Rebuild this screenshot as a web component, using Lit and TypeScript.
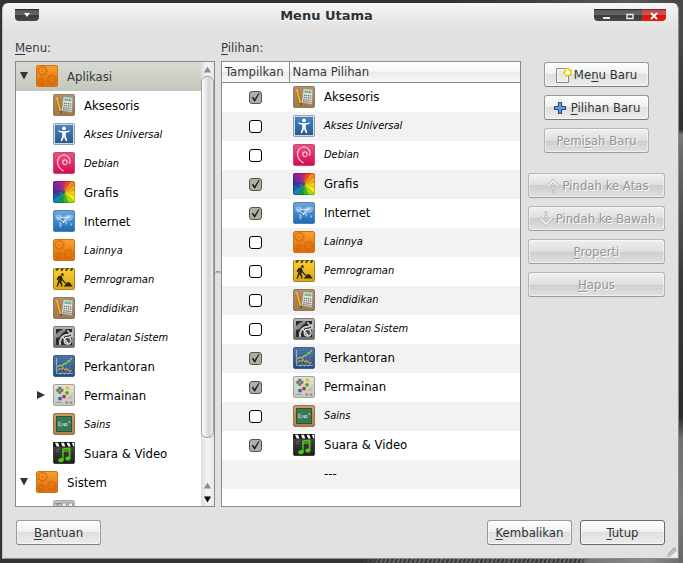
import { LitElement, html, svg, css, nothing, TemplateResult } from "lit";
import { customElement, property } from "lit/decorators.js";
import { classMap } from "lit/directives/class-map.js";

interface Entry {
  name: string;
  icon: string;
  shown: boolean;
  expander?: "open" | "closed";
}

const entries: Entry[] = [
  { name: "Aksesoris", icon: "accessories", shown: true },
  { name: "Akses Universal", icon: "access", shown: false },
  { name: "Debian", icon: "debian", shown: false },
  { name: "Grafis", icon: "graphics", shown: true },
  { name: "Internet", icon: "internet", shown: true },
  { name: "Lainnya", icon: "gears", shown: false },
  { name: "Pemrograman", icon: "development", shown: false },
  { name: "Pendidikan", icon: "accessories", shown: false },
  { name: "Peralatan Sistem", icon: "system", shown: false },
  { name: "Perkantoran", icon: "office", shown: true },
  { name: "Permainan", icon: "games", shown: true, expander: "closed" },
  { name: "Sains", icon: "science", shown: false },
  { name: "Suara & Video", icon: "multimedia", shown: true },
];

const tile = (id: string, top: string, bottom: string, edge: string) => svg`
  <defs><linearGradient id=${id} x1="0" y1="0" x2="0" y2="1">
    <stop offset="0" stop-color=${top}></stop><stop offset="1" stop-color=${bottom}></stop>
  </linearGradient></defs>
  <rect x=".5" y=".5" width="21" height="21" rx="1.5" fill="url(#${id})" stroke=${edge}></rect>`;

const wheel = ["#f08a1c", "#f7a81b", "#fbd20c", "#f4f00a", "#a5dc14", "#3cb42c", "#159a4e", "#0f86b8", "#2353b8", "#4b2f9c", "#6a2a9a", "#8e2796", "#c2247a", "#e8452c"];
const spoke = (i: number) => {
  const a = ((i * 360) / wheel.length - 60) * (Math.PI / 180);
  return [11 + 18 * Math.cos(a), 11 + 18 * Math.sin(a)];
};

const gear = (x: number, y: number, r: number) => svg`
  <circle cx=${x} cy=${y} r=${r} fill="none" stroke="#c85f06" stroke-opacity=".6" stroke-width="1.3"></circle>
  <circle cx=${x} cy=${y} r=${r + 1.2} fill="none" stroke="#c85f06" stroke-opacity=".6" stroke-width="1.3" stroke-dasharray="1.5 1.5"></circle>
  <circle cx=${x} cy=${y} r=${r / 3} fill="#c85f06" fill-opacity=".5"></circle>`;

const art: Record<string, () => TemplateResult> = {
  accessories: () => svg`${tile("wood", "#b59468", "#9a7448", "#8f7a60")}
    <path d="M2 16H21M2 19H21" stroke="#ae8656" stroke-width=".7"></path>
    <path d="M2.2 3.2 4.8 2.2 8.6 16.2 8.4 19 6.2 17Z" fill="#f2b42a" stroke="#8e5a12" stroke-width=".6"></path>
    <path d="M2.2 3.2 4.8 2.2 5.3 4.2 2.8 5Z" fill="#e3a49a"></path><path d="M7 17.4 8.6 17 8.4 19.2Z" fill="#3b2a18"></path>
    <path d="M10.4 2.8 19.8 3.4 18.8 18.4 8.6 16.6Z" fill="#e3e5e0" stroke="#8a8d85" stroke-width=".6"></path>
    <path d="M11.4 4.4 18.6 4.8 18.4 7.4 11.2 6.8Z" fill="#79b698"></path>
    <path d="M10.9 9.3 18.2 10M10.6 11.5 18 12.2M10.3 13.7 17.8 14.6M10.1 15.4 17.6 16.6" stroke="#6c706c" stroke-width="1.3" stroke-dasharray="1.4 .7"></path>`,
  access: () => svg`${tile("acc", "#4f86bd", "#23568f", "#8fa3b8")}
    <rect x="1.5" y="1.5" width="19" height="19" fill="none" stroke="#c8d8e8"></rect>
    <circle cx="11" cy="5.4" r="1.9" fill="#fff"></circle>
    <path d="M5.4 7.4 9.8 8.2H12.2L16.6 7.4V8.7L12.8 9.7V13L14.4 18H12.8L11 13.8 9.2 18H7.6L9.2 13V9.7L5.4 8.7Z" fill="#fff"></path>`,
  debian: () => svg`${tile("deb", "#e8527e", "#d70a53", "#c24a74")}
    <path d="M12.6 12.6C10.6 12.8 9.5 11.4 9.7 9.9 10 8.2 11.8 7.4 13.3 8.3 14.6 9.2 14.3 10.6 13.7 11.3M16.6 11.4C18 7.6 16 3.4 11.4 3 6.6 2.8 4 7 4.6 11 5.2 15 7.6 17.4 10.2 18.8" fill="none" stroke="#fbd3e0" stroke-width="1.2" stroke-linecap="round"></path>`,
  graphics: () => svg`<defs><clipPath id="pinwheel"><rect width="22" height="22" rx="2"></rect></clipPath></defs>
    <g clip-path="url(#pinwheel)">${wheel.map((c, i) => {
      const [x, y] = spoke(i);
      const [u, v] = spoke(i + 1.1);
      return svg`<path d="M11 11 ${x} ${y} ${u} ${v}Z" fill=${c}></path>
        <path d="M11 11 ${x} ${y}" stroke="#222" stroke-opacity=".3" stroke-width=".6"></path>`;
    })}<circle cx="11" cy="11" r="1.4" fill="#222" fill-opacity=".4"></circle></g>
    <rect x=".5" y=".5" width="21" height="21" rx="1.5" fill="none" stroke="#000" stroke-opacity=".2"></rect>`,
  internet: () => svg`${tile("net", "#6fa9dc", "#1a68b4", "#4d83b8")}
    <path d="M2 5.4 5 4.4 8.6 5.2 9.4 7 7.4 9.4 5.8 9.8 5.4 11.2 3.4 9.4ZM6 11.8 8.8 12.4 9.2 14.2 7.4 18.6 6.4 17ZM11.8 6 14 4.4 19.6 5.2 20.4 7.2 18.2 10 16.4 11.4 14.6 9.4 14 13.4 12.8 15.6 11.6 11.4 11 9.4ZM16.8 13.2 19.2 13.6 18.8 15.8 17 15Z" fill="#a9d0ef" fill-opacity=".65"></path>
    <path d="M4 7.2 10.6 12 15.6 6.4M7 7.4H14.8" fill="none" stroke="#f2f9ff" stroke-width=".8"></path>
    <circle cx="10.6" cy="12" r=".9" fill="#fff"></circle><circle cx="15.6" cy="6.6" r=".9" fill="#fff"></circle>`,
  gears: () => svg`${tile("gear", "#f9a12c", "#e06c08", "#c9741c")}
    ${gear(6.4, 5.8, 3.8)}${gear(15.6, 14.6, 3.6)}${gear(5.4, 16.4, 2.2)}`,
  development: () => svg`${tile("dev", "#f8cf3a", "#dda510", "#a8831c")}
    <path d="M2.4 2.8 4 .6H6L4.4 2.8ZM7.2 2.8 8.8 .6H10.8L9.2 2.8ZM12 2.8 13.6 .6H15.6L14 2.8ZM16.8 2.8 18.4 .6H20.4L18.8 2.8Z" fill="#2e2608"></path>
    <circle cx="9.4" cy="6.6" r="1.4" fill="#2e2608"></circle>
    <path d="M7 7.6 9.2 8.6 9.6 11 13.4 15.6 12.8 16.2 9 12.6 8.2 13.6 9.4 15.8 9.2 18.6H7.8L7.8 16 6.4 14.4 5 18.6H3.4L5.2 13.2 5.6 10.8 4.6 12.2 3.6 11.8 4.8 8.8Z" fill="#2e2608"></path>
    <path d="M10.6 18.6 12.6 16.4 14.2 14.2 16.4 14.2 18.4 16.6 19.8 18.6Z" fill="#2e2608"></path>`,
  system: () => svg`${tile("sys", "#b8b8b8", "#6c6c6c", "#7a7a7a")}
    <rect x="3" y="3" width="16" height="16" fill="#2a2a2a"></rect>
    <path d="M3 8 6 5.4 10 3H13L12 5.6 9 7.6 6.4 11 3 12Z" fill="#8c8c8c"></path>
    <path d="M7 19C6.2 13.4 9 9.2 14.4 8.8L19 7V10.4L16 11" fill="none" stroke="#c4c4c4" stroke-width="2"></path>
    <circle cx="14.6" cy="14.8" r="3.4" fill="#4a4a4a" stroke="#dcdcdc" stroke-width="1.3"></circle>
    <path d="M9.4 10.6 16 18.6M14.2 4.2 16.8 6.6" fill="none" stroke="#efefef" stroke-width="1.2"></path>`,
  office: () => svg`${tile("off", "#4b77a8", "#264c7a", "#3f5f86")}
    <path d="M3.6 3V18.4H20M2.6 5.4H3.6M2.6 9.4H3.6M2.6 13.4H3.6M7.4 18.4V19.6M11.4 18.4V19.6M15.4 18.4V19.6" stroke="#c2d3e4" stroke-width=".7" fill="none"></path>
    <path d="M9 12V18M13 10V18M17 6V18" stroke="#7f9fc0" stroke-width=".5"></path>
    <path d="M4.4 12 7 10.2 9 11.2 11.4 8.4 13 8.8 15.2 5.8 16.4 6.4 18.8 3.2" fill="none" stroke="#9bd24a" stroke-width="1.1"></path>
    <path d="M4.4 16 6.4 13.6 8.4 14.2 10.2 12.6 12 15 14 13.8 16.2 16.2 18.8 15.6" fill="none" stroke="#dba22a" stroke-width="1.1"></path>`,
  games: () => svg`${tile("pad", "#e4e4dc", "#c6c6ba", "#a0a096")}
    <circle cx="6.8" cy="6.4" r="4.4" fill="#cfcfc6"></circle>
    <path d="M5.4 3H8.2V5H10.2V7.8H8.2V9.8H5.4V7.8H3.4V5H5.4Z" fill="#6c6f6c"></path><circle cx="6.8" cy="6.4" r="1" fill="#a5a8a5"></circle>
    <circle cx="14.6" cy="4.2" r="1.9" fill="#f2bb1c"></circle><circle cx="14" cy="8.8" r="1.9" fill="#3fae1e"></circle>
    <circle cx="11" cy="12.6" r="1.9" fill="#d92a1c"></circle><circle cx="7" cy="14.6" r="1.9" fill="#1e66c0"></circle>
    <path d="M14.4 15.2 19.6 10.2M16.8 15.2 19.6 12.6" stroke="#a8a89e" stroke-width="1.1" stroke-dasharray="1.2 .8"></path>
    <path d="M12.4 18.6H15M16.8 18.6H19.2" stroke="#84867e" stroke-width="2"></path><path d="M2.6 18.4H9" stroke="#84867e" stroke-width=".7"></path>`,
  science: () => svg`${tile("board", "#cc9a64", "#b07c42", "#9c7446")}
    <path d="M1 5.5H21M1 17H21" stroke="#dba970" stroke-width=".6"></path>
    <rect x="3.5" y="3.5" width="15" height="15" fill="#37775a" stroke="#28573f"></rect>
    <path d="M5.6 9.2H7.8M5.6 11H7.4M5.6 12.8H7.8M5.8 9V13M9 10.2V13M10 10.2 11.4 13M11.4 10.2V13M12.4 10.4H14V12.8H12.4ZM15.2 8.6H16.8V10.4" fill="none" stroke="#cfe6d6" stroke-width=".7"></path>`,
  multimedia: () => svg`${tile("film", "#4a4a4a", "#202020", "#3a3a3a")}
    <rect width="22" height="5" rx="1" fill="#151515"></rect>
    <path d="M2 .8H5L6.6 4.4H3.6ZM8 .8H11L12.4 4.4H9.4ZM13.6 .8H16.4L17.8 4.4H15ZM18.8 .8H21.4V4.4H20.2Z" fill="#f0f0f0"></path>
    <path d="M3 7.4H7M3 9.4H6" stroke="#707070" stroke-width=".7"></path>
    <path d="M9.6 7.2 16.6 6.4V16.4" fill="none" stroke="#49c814" stroke-width="1.8"></path>
    <path d="M9.9 7V18.2" stroke="#49c814" stroke-width="1.5"></path>
    <path d="M9.4 9.4 17 8.6" stroke="#49c814" stroke-width="1.4"></path>
    <ellipse cx="8" cy="18.2" rx="2.7" ry="2.1" fill="#49c814"></ellipse><ellipse cx="14.8" cy="16.6" rx="2.6" ry="2.1" fill="#49c814"></ellipse>`,
  preferences: () => svg`${tile("prefs", "#c4c4c4", "#b4b4b4", "#a8a8a8")}
    <path d="M2 3.5H8" stroke="#8a8a8a" stroke-width="1.2"></path>
    <path d="M4.5 4V19" stroke="#8a8a8a" stroke-width="1.2"></path>
    <rect x="9" y="3" width="4" height="5" fill="#f6f6f6" stroke="#8a8a8a" stroke-width=".8"></rect>
    <rect x="15.5" y="3" width="4" height="5" fill="#f6f6f6" stroke="#8a8a8a" stroke-width=".8"></rect>`,
};

@customElement("menu-icon")
class MenuIcon extends LitElement {
  @property() name = "";
  static styles = css`
    :host { display: block; flex: none; width: 22px; height: 22px; }
    svg { display: block; }
  `;
  render() {
    return html`<svg width="22" height="22" viewBox="0 0 22 22" aria-hidden="true">${art[this.name]()}</svg>`;
  }
}

const arrow = (d: string, color = "#2e3436") =>
  html`<svg width="9" height="9" viewBox="0 0 9 9" aria-hidden="true"><path d=${d} fill=${color}></path></svg>`;
const DOWN = "M0 1H8L4 8.5Z";
const RIGHT = "M0 1 8 5 0 9Z";
const UP = "M1 7.5H8L4.5 1.5Z";
const SMALL_DOWN = "M1 1.5H8L4.5 7.5Z";

@customElement("app-root")
class AppRoot extends LitElement {
  static styles = css`
    * { box-sizing: border-box; }
    :host {
      display: flex;
      height: 100vh;
      box-sizing: border-box;
      padding: 3px 4px 4px 2px;
      font: 13px/18px "DejaVu Sans Condensed", "DejaVu Sans", sans-serif;
      color: #33393d;
      background:
        linear-gradient(#4a4a4a 0 6%, #333 20%, #303030 23%, #7d7d7d 24%, #6a6a6a 27%, #5a5a5a 34%, #4a4a4a 42%, #383838 50%, #2c2c2c 74%, #707070 78%, #7c7c7c 90%, #666 100%) right / 4px 100% no-repeat,
        linear-gradient(90deg, #333 0 53%, transparent 56% 85%, #777 86%, #8a8a8a 95%, #6c6c6c 100%) bottom / 100% 4px no-repeat,
        repeating-linear-gradient(110deg, #3a3a3a 0 2px, #626262 2px 4px) bottom / 100% 4px no-repeat,
        linear-gradient(90deg, #333 0 65%, #3a3a3a 75%, #5a5a5a 92%, #444 100%);
    }
    button { font: inherit; color: inherit; margin: 0; padding: 0; border: 0; background: none; }
    svg { display: block; flex: none; }
    u { text-decoration-skip-ink: none; text-underline-offset: 2px; }
    .window {
      flex: 1; min-width: 0; display: flex; flex-direction: column;
      border: 1px solid #8c8c8c; border-top-color: #f4f4f4; border-left-color: #c4c4c4;
      border-radius: 6px 6px 0 0;
      background: linear-gradient(#f4f4f4, #e1e1e1 26px);
      position: relative;
    }
    .titlebar { display: flex; align-items: flex-start; padding: 5px 12px 0; height: 35px; }
    .title {
      flex: 1; margin: 0; padding-left: 20px; text-align: center;
      font: bold 13px/14px "DejaVu Sans", sans-serif; color: #2b3135; text-shadow: 0 1px #fff;
    }
    .caps { display: flex; border-radius: 0 0 4px 4px; overflow: hidden; }
    .cap {
      display: flex; align-items: center; justify-content: center; width: 24px; height: 12px;
      background: linear-gradient(#585858, #6a6a6a 50%, #3c3c3c 50%, #4a4a4a);
      border-top: 1px solid #2c2c2c;
    }
    .cap.close { background: linear-gradient(#b84a4a, #cf5a5a 50%, #d81608 50%, #e0200e); border-top-color: #7c2c2c; }
    .body { flex: 1; min-height: 0; display: flex; padding: 0 13px 0 12px; }
    .pane { display: flex; flex-direction: column; min-height: 0; }
    .pane.menus { width: 200px; }
    .pane.items { flex: 1; min-width: 0; }
    .caption { line-height: 18px; height: 22px; }
    .frame { flex: 1; min-height: 0; display: flex; overflow: hidden; border: 1px solid #8a8a8a; background: #fff; color: #000; }
    .grip { width: 6px; display: flex; align-items: center; justify-content: center; }
    .grip span { width: 6px; height: 4px; border-radius: 3px; background: linear-gradient(#888, #fafafa); }
    .tree, .branch { list-style: none; margin: 0; padding: 0; }
    .tree { flex: 1; min-width: 0; overflow: hidden; }
    .node { display: flex; align-items: center; height: 29px; padding: 0 0 1px 3px; white-space: nowrap; }
    .branch .node { padding-left: 20px; }
    .node.selected { background: linear-gradient(#d9dbd3, #c3c7bb); color: #33393d; }
    .toggle { width: 17px; padding-left: 1px; flex: none; }
    .node .name { padding: 1px 0 0 9px; }
    .name.hidden { font-size: 11px; font-style: italic; }
    .scroll {
      width: 13px; display: flex; flex-direction: column; align-items: center;
      background: linear-gradient(90deg, #dedede, #f4f4f4 50%, #e8e8e8);
    }
    .step { width: 13px; height: 14px; display: flex; justify-content: center; align-items: center; flex: none; }
    .track { flex: 1; width: 13px; min-height: 0; }
    .thumb {
      height: 90%; border: 1px solid #a0a0a0; border-radius: 6px;
      background: linear-gradient(90deg, #fff, #e6e6e6 40%, #d2d2d2 65%, #f0f0f0);
    }
    table { width: 100%; border-collapse: collapse; table-layout: fixed; }
    .table { flex: 1; min-width: 0; }
    th {
      height: 20px; padding: 0 0 0 3px; text-align: left; font-weight: normal; color: #33393d; white-space: nowrap;
      background: linear-gradient(#fff, #f4f4f4 50%, #e9e9e9 50%, #fafafa); border-bottom: 1px solid #8a8a8a;
    }
    .tick { width: 67px; border-right: 1px solid #8a8a8a; }
    td { height: 29px; padding: 0; }
    tbody tr:nth-child(even) { background: #f2f2f2; }
    input {
      appearance: none; display: block; width: 13px; height: 13px; margin: 0 0 0 27px;
      border: 1px solid #000; border-radius: 3px; background: #fff;
    }
    input:checked { background: #a9b2a3; border-color: #50584e; }
    input:checked::after {
      content: ""; display: block; width: 11px; height: 11px; background: #1c2022;
      clip-path: polygon(16% 54%, 28% 48%, 42% 68%, 78% 14%, 88% 14%, 46% 90%, 38% 90%);
    }
    .entry { display: flex; align-items: center; height: 29px; padding: 0 0 1px 4px; }
    .entry .name { padding: 1px 0 0 9px; }
    .entry .name.separator { padding-left: 31px; }
    .actions { width: 137px; margin-left: 7px; padding-top: 23px; display: flex; flex-direction: column; gap: 20px; }
    .group { display: flex; flex-direction: column; gap: 8px; }
    .group.create { padding: 0 16px; }
    .btn {
      display: flex; align-items: center; justify-content: center; gap: 2px; height: 25px;
      border: 1px solid #999; border-bottom-color: #7c7c7c; border-radius: 3px; white-space: nowrap;
      background: linear-gradient(#fefefe, #efefef 50%, #dfdfdf 50%, #ececec);
      box-shadow: inset 0 0 0 1px rgba(255, 255, 255, .5);
      color: #2e3438;
    }
    .btn:disabled {
      color: #969696; text-shadow: 1px 1px #fff; border-color: #b4b4b4; border-bottom-color: #9c9c9c;
      background: linear-gradient(#f0f0f0, #dedede 50%, #cdcdcd 50%, #e0e0e0);
    }
    .footer { display: flex; gap: 8px; padding: 13px; }
    .footer .btn { width: 85px; }
    .footer .btn.default { border-color: #6a6a6a; }
    .spacer { flex: 1; }
    .resize { position: absolute; right: 1px; bottom: 1px; }
  `;

  private nodeRow(e: Entry, selected = false) {
    return html`<div class=${classMap({ node: true, selected })}>
      <span class="toggle">${e.expander
        ? html`<button aria-label="Bentang ${e.name}">${arrow(e.expander === "open" ? DOWN : RIGHT)}</button>`
        : nothing}</span>
      <menu-icon name=${e.icon}></menu-icon>
      <span class=${classMap({ name: true, hidden: !e.shown })}>${e.name}</span>
    </div>`;
  }

  private itemRow(e: Entry, i: number) {
    return html`<tr>
      <td><input type="checkbox" id="item-${i}" .checked=${e.shown}></td>
      <td><label class="entry" for="item-${i}"><menu-icon name=${e.icon}></menu-icon>
        <span class=${classMap({ name: true, hidden: !e.shown })}>${e.name}</span></label></td>
    </tr>`;
  }

  render() {
    return html`<main class="window">
      <header class="titlebar">
        <div class="caps"><button class="cap" aria-label="Menu jendela">
          <svg width="8" height="5" viewBox="0 0 8 5"><path d="M1 0H7L4 4Z" fill="#fff"></path></svg></button></div>
        <h1 class="title">Menu Utama</h1>
        <div class="caps">
          <button class="cap" aria-label="Minimalkan"><svg width="8" height="8" viewBox="0 0 8 8"><path d="M1 5H8V7H1Z" fill="#eee"></path></svg></button>
          <button class="cap" aria-label="Maksimalkan"><svg width="8" height="8" viewBox="0 0 8 8"><path d="M1 2.5H7V6.5H1Z" fill="none" stroke="#eee" stroke-width="1.4"></path></svg></button>
          <button class="cap close" aria-label="Tutup jendela"><svg width="8" height="8" viewBox="0 0 8 8"><path d="M1 1 7 7M7 1 1 7" stroke="#fff" stroke-width="1.8"></path></svg></button>
        </div>
      </header>
      <div class="body">
        <section class="pane menus">
          <div class="caption"><u>M</u>enu:</div>
          <div class="frame">
            <ul class="tree">
              <li>${this.nodeRow({ name: "Aplikasi", icon: "gears", shown: true, expander: "open" }, true)}
                <ul class="branch">${entries.map((e) => html`<li>${this.nodeRow(e)}</li>`)}</ul>
              </li>
              <li>${this.nodeRow({ name: "Sistem", icon: "gears", shown: true, expander: "open" })}
                <ul class="branch"><li>${this.nodeRow({ name: "", icon: "preferences", shown: true })}</li></ul>
              </li>
            </ul>
            <div class="scroll">
              <button class="step" aria-label="Gulir ke atas">${arrow(UP, "#8a8a8a")}</button>
              <div class="track"><div class="thumb"></div></div>
              <button class="step" aria-label="Gulir ke atas">${arrow(UP, "#8a8a8a")}</button>
              <button class="step" aria-label="Gulir ke bawah">${arrow(SMALL_DOWN, "#000")}</button>
            </div>
          </div>
        </section>
        <div class="grip"><span></span></div>
        <section class="pane items">
          <div class="caption"><u>P</u>ilihan:</div>
          <div class="frame"><div class="table">
            <table>
              <thead><tr><th class="tick">Tampilkan</th><th>Nama Pilihan</th></tr></thead>
              <tbody>${entries.map((e, i) => this.itemRow(e, i))}
                <tr><td></td><td><div class="entry"><span class="name separator">---</span></div></td></tr>
              </tbody>
            </table></div>
          </div>
        </section>
        <div class="actions">
          <div class="group create">
            <button class="btn"><svg width="16" height="18" viewBox="0 0 16 18"><path d="M.5 2.5H12.5V16.5H.5Z" fill="#fafaf8" stroke="#858585"></path><path d="M2 15V4H9L11 9V15Z" fill="#e8e8e4"></path><path d="M12 2.2 13.4 4 15.4 4.4 14.6 6.6 15 9 12.6 9 10.6 10 9.4 8 7.8 6.4 9.4 4.8 9.8 2.8Z" fill="#fff" stroke="#e8cf00" stroke-width="1.4"></path></svg>
              <span>Me<u>n</u>u Baru</span></button>
            <button class="btn"><svg width="16" height="16" viewBox="0 0 16 16"><path d="M5.5 2.5H8.5V6.5H12.5V9.5H8.5V13.5H5.5V9.5H1.5V6.5H5.5Z" fill="#6f9fd8" stroke="#274f8c" stroke-width="1.2" stroke-linejoin="round"></path></svg>
              <span><u>P</u>ilihan Baru</span></button>
            <button class="btn" disabled><span>Pemi<u>s</u>ah Baru</span></button>
          </div>
          <div class="group">
            <button class="btn" disabled><svg width="16" height="18" viewBox="0 0 16 18"><path d="M8 2 15 9 13.4 10.8 8 6 2.6 10.8 1 9Z" fill="#e9e9e9" stroke="#bcbcbc"></path><circle cx="8" cy="11.4" r="1.4" fill="#eee" stroke="#bbb"></circle><circle cx="8" cy="15.2" r="1.2" fill="#eee" stroke="#bbb"></circle></svg>
              <span>Pindah ke Atas</span></button>
            <button class="btn" disabled><svg width="16" height="18" viewBox="0 0 16 18"><path d="M8 16 15 9 13.4 7.2 8 12 2.6 7.2 1 9Z" fill="#e9e9e9" stroke="#bcbcbc"></path><circle cx="8" cy="6.6" r="1.4" fill="#eee" stroke="#bbb"></circle><circle cx="8" cy="2.8" r="1.2" fill="#eee" stroke="#bbb"></circle></svg>
              <span>Pindah ke Bawah</span></button>
            <button class="btn" disabled><span><u>P</u>roperti</span></button>
            <button class="btn" disabled><span><u>H</u>apus</span></button>
          </div>
        </div>
      </div>
      <footer class="footer">
        <button class="btn"><span><u>B</u>antuan</span></button>
        <span class="spacer"></span>
        <button class="btn"><span><u>K</u>embalikan</span></button>
        <button class="btn default"><span><u>T</u>utup</span></button>
      </footer>
      <svg class="resize" width="10" height="10" viewBox="0 0 10 10" aria-hidden="true"><path d="M0 9 7 0 10 3V10H0Z" fill="#c4c4c4"></path><path d="M1 8 7 1 9 3" fill="none" stroke="#9a9a9a"></path><path d="M3 10 10 4V10Z" fill="#f2f2f2"></path></svg>
    </main>`;
  }
}
